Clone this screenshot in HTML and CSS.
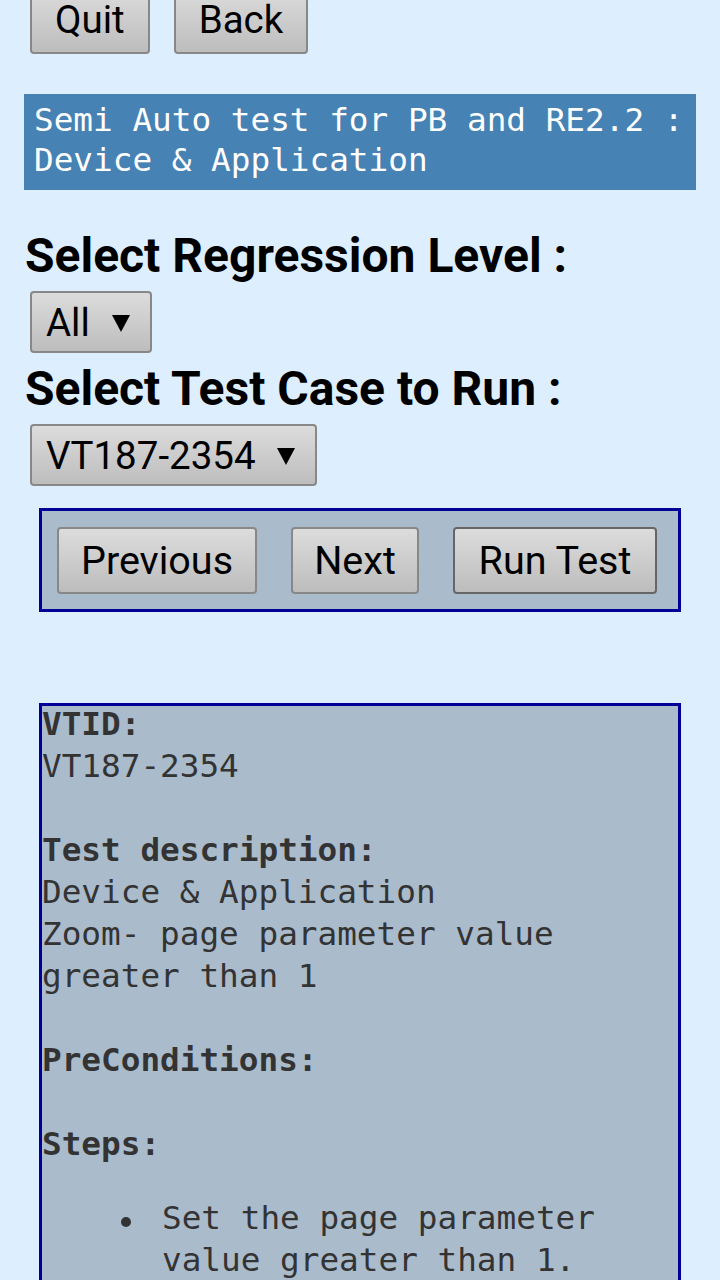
FILE: index.html
```html
<!DOCTYPE html>
<html>
<head>
<meta charset="utf-8">
<link rel="stylesheet" href="styles.css">
</head>
<body>
<div class="topbar">
  <button class="btn">Quit</button>
  <button class="btn">Back</button>
</div>
<div class="title">Semi Auto test for PB and RE2.2 : Device &amp; Application</div>
<h3 class="label">Select Regression Level :</h3>
<div class="select sel-level"><span>All</span><svg class="arrow" width="18" height="17" viewBox="0 0 18 17"><polygon points="0,0 18,0 9,17" fill="#000"/></svg></div>
<h3 class="label label2">Select Test Case to Run :</h3>
<div class="select sel-case"><span>VT187-2354</span><svg class="arrow" width="18" height="17" viewBox="0 0 18 17"><polygon points="0,0 18,0 9,17" fill="#000"/></svg></div>
<div class="nav">
  <button class="btn btn-nav btn-prev">Previous</button>
  <button class="btn btn-nav btn-next">Next</button>
  <button class="btn btn-nav btn-run">Run Test</button>
</div>
<div class="details">
  <div class="details-text">
    <b>VTID:</b><br>VT187-2354<br><br>
    <b>Test description:</b><br>Device &amp; Application<br>Zoom- page parameter value greater than 1<br><br>
    <b>PreConditions:</b><br><br>
    <b>Steps:</b>
    <ul class="steps"><li>Set the page parameter value greater than 1.</li></ul>
  </div>
</div>
</body>
</html>
```
FILE: styles.css
```css
html, body {
  margin: 0;
  padding: 0;
  background: #ddeeff;
}
body {
  font-family: Roboto, "Liberation Sans", sans-serif;
  overflow: hidden;
  height: 1280px;
}
.topbar {
  display: flex;
  gap: 24px;
  padding-left: 30px;
  margin-top: -13px;
}
.btn {
  box-sizing: border-box;
  height: 67px;
  padding: 0 23px;
  border: 2px solid #888;
  border-radius: 4px;
  background: linear-gradient(#dcdcdc, #bdbdbd);
  font-family: Roboto, "Liberation Sans", sans-serif;
  font-size: 38.5px;
  color: #000;
  line-height: 1;
  white-space: nowrap;
  flex: none;
}
.btn-nav {
  font-size: 39.5px;
  padding: 0;
  text-align: center;
}
.btn-prev { width: 200px; }
.btn-next { width: 128px; }
.btn-run {
  width: 204px;
  border-color: #666;
}
.title {
  margin: 40px 24px 0 24px;
  background: #4682b4;
  color: #fff;
  font-family: "DejaVu Sans Mono", monospace;
  font-size: 32.7px;
  line-height: 40px;
  padding: 6px 10px 10px 10px;
  height: 80px;
}
.label {
  margin: 38px 0 0 25px;
  font-size: 48px;
  font-weight: 700;
  line-height: 56px;
  color: #000;
}
.label2 {
  margin-top: 8px;
}
.select {
  box-sizing: border-box;
  display: flex;
  align-items: center;
  justify-content: space-between;
  height: 62px;
  margin: 7px 0 0 30px;
  padding: 0 20px 0 14px;
  border: 2px solid #888;
  border-radius: 4px;
  background: linear-gradient(#dcdcdc, #bdbdbd);
  font-size: 38.5px;
  color: #000;
}
.sel-level { width: 122px; }
.sel-case { width: 287px; }
.arrow { margin-top: 2px; }
.nav {
  box-sizing: border-box;
  display: flex;
  gap: 34px;
  width: 642px;
  margin: 22px 0 0 39px;
  padding: 16px 15px 15px 15px;
  border: 3px solid #000099;
  background: #aabbcc;
}
.details {
  box-sizing: border-box;
  width: 642px;
  margin: 91px 0 0 39px;
  border: 3px solid #000099;
  border-bottom: none;
  background: #aabbcc;
  height: 700px;
  color: #333;
  font-family: "DejaVu Sans Mono", monospace;
  font-size: 32.7px;
  line-height: 42px;
}
.details-text {
  margin-top: -3px;
}
.steps {
  margin: 32px 0 0 0;
  padding-left: 120px;
  list-style: none;
}
.steps li {
  position: relative;
}
.steps li::before {
  content: "";
  position: absolute;
  left: -41px;
  top: 20px;
  width: 10px;
  height: 10px;
  border-radius: 50%;
  background: #333;
}
```
